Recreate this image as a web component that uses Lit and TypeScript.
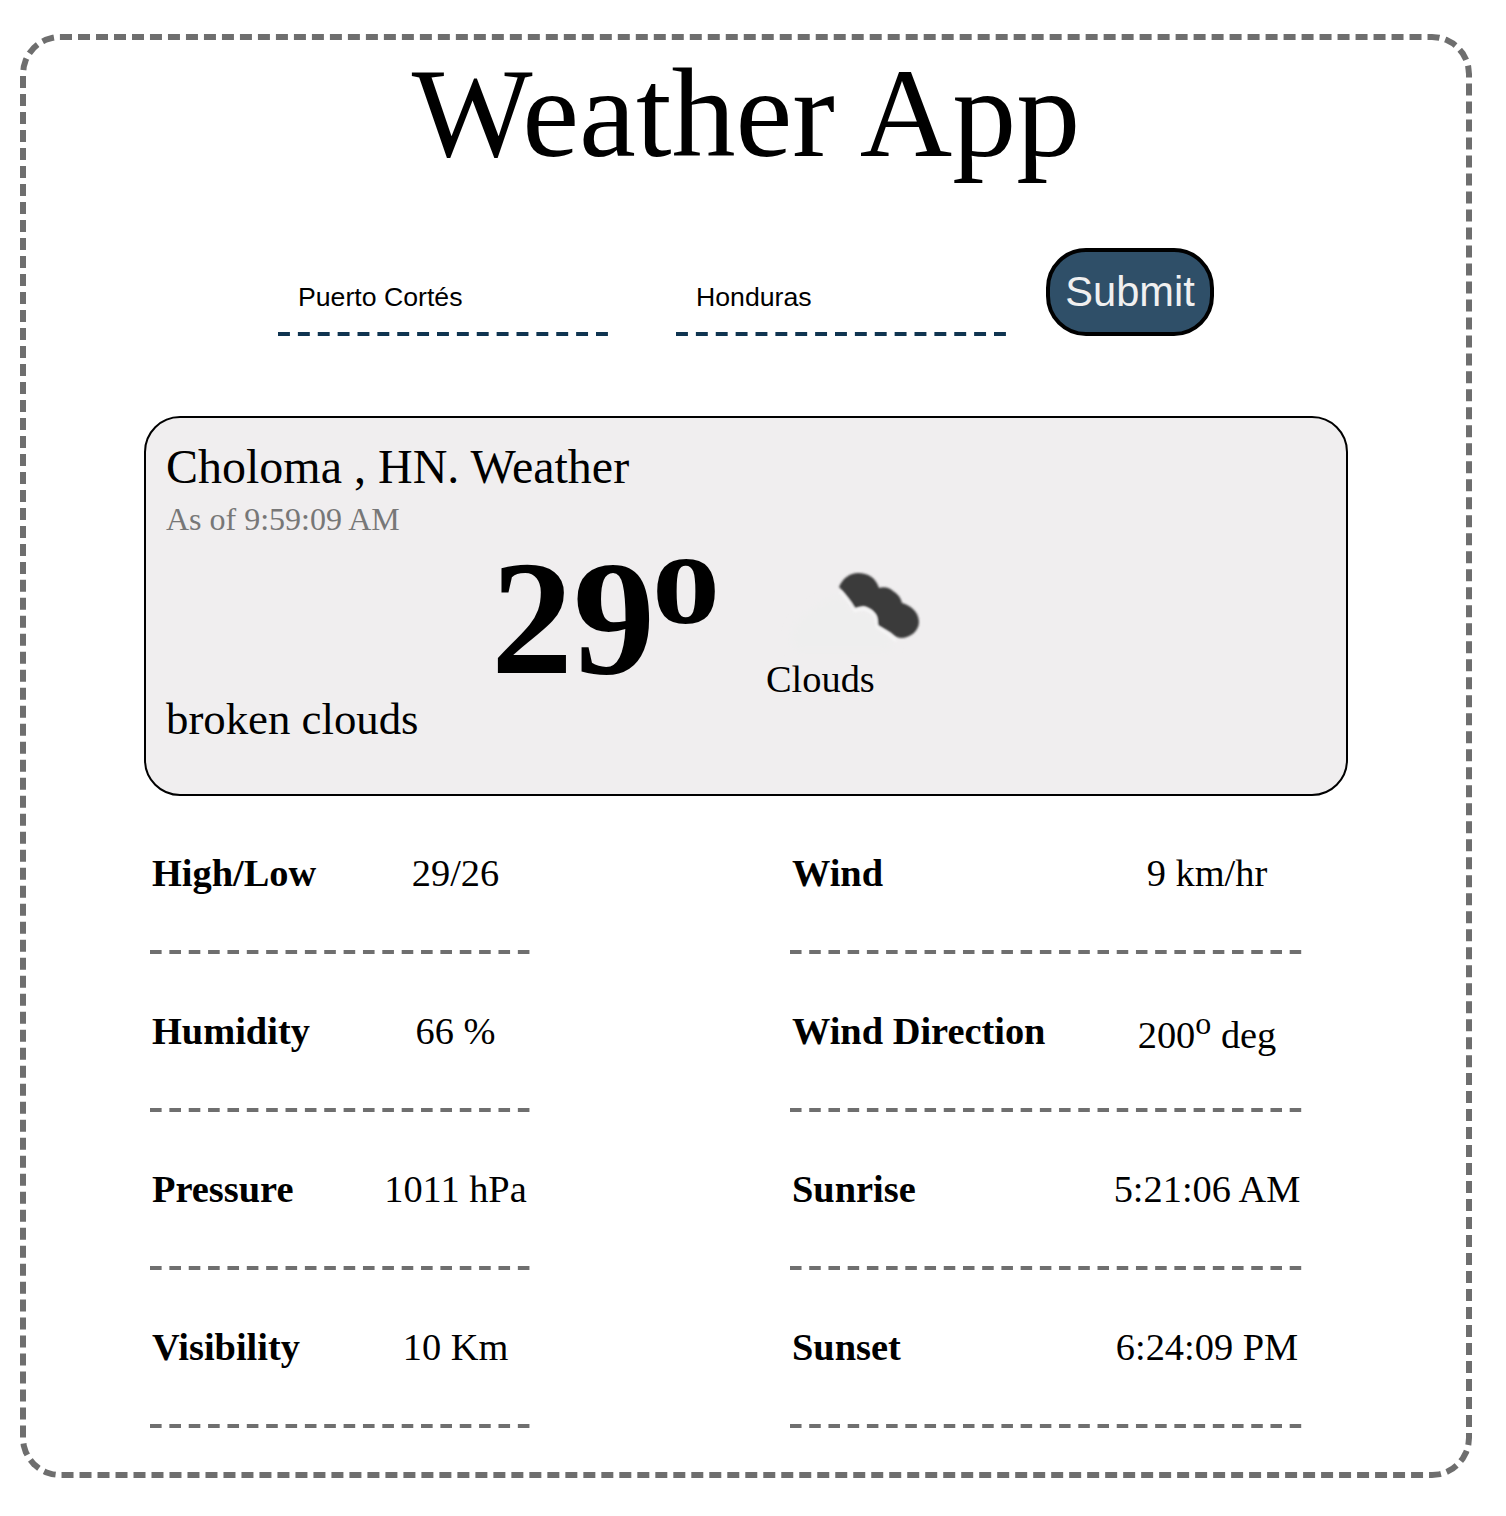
import { LitElement, html, css } from "lit";
import { customElement, property } from "lit/decorators.js";

const LEFT_ROWS = [
  { label: "High/Low", value: html`29/26` },
  { label: "Humidity", value: html`66 %` },
  { label: "Pressure", value: html`1011 hPa` },
  { label: "Visibility", value: html`10 Km` },
];

const RIGHT_ROWS = [
  { label: "Wind", value: html`9 km/hr` },
  { label: "Wind Direction", value: html`200<sup>o</sup> deg` },
  { label: "Sunrise", value: html`5:21:06 AM` },
  { label: "Sunset", value: html`6:24:09 PM` },
];

@customElement("app-root")
export class AppRoot extends LitElement {
  @property() city = "Puerto Cortés";
  @property() country = "Honduras";

  static styles = css`
    :host {
      display: block;
      height: 1516px;
      font-family: "Liberation Serif", "Times New Roman", serif;
      color: #000;
      background: #fff;
    }
    .app {
      box-sizing: border-box;
      width: 1452px;
      height: 1444px;
      margin-left: 20px;
      position: relative;
      top: 34px;
      border: 6px dashed #6e6e6e;
      border-radius: 40px;
      padding: 1px 0 0 118px;
    }
    h1 {
      margin: 0 0 0 -118px;
      font-size: 128px;
      font-weight: 400;
      line-height: 144px;
      text-align: center;
    }
    form {
      display: flex;
      justify-content: center;
      align-items: flex-start;
      margin: 63px 0 0 -118px;
    }
    input {
      box-sizing: border-box;
      width: 330px;
      height: 84px;
      margin: 4px 68px 0 0;
      padding: 10px 20px 4px;
      border: 0;
      outline: none;
      background: linear-gradient(to right, #0f3450 12px, transparent 12px) left bottom / 19.875px 4px repeat-x;
      font: 26.67px "Liberation Sans", Arial, sans-serif;
      color: #000;
    }
    input + input {
      margin-right: 40px;
    }
    button {
      box-sizing: border-box;
      width: 168px;
      height: 88px;
      padding: 0;
      border: 4px solid #000;
      border-radius: 40px;
      background: #2f4f68;
      font: 41.6px "Liberation Sans", Arial, sans-serif;
      color: #f0f0f0;
    }
    .card {
      box-sizing: border-box;
      width: 1204px;
      height: 380px;
      margin: 80px 0 0;
      padding: 21px 20px 0;
      border: 2px solid #000;
      border-radius: 36px;
      background: #f0eeef;
    }
    .city {
      font-size: 48px;
      line-height: 56px;
    }
    .time {
      font-size: 32px;
      line-height: 40px;
      margin-top: 4px;
      color: #777;
    }
    .now {
      display: flex;
      align-items: flex-start;
    }
    .desc {
      width: 329px;
      margin-top: 154px;
      font-size: 44.8px;
      line-height: 52px;
    }
    .temp {
      width: 275px;
      margin: -1px 0 0 -4px;
      font-size: 164px;
      font-weight: 700;
      line-height: 160px;
    }
    .temp sup {
      margin-left: -3px;
      font-size: 136px;
      line-height: 0;
      vertical-align: 50px;
    }
    .sky {
      font-size: 38.4px;
      line-height: 44px;
    }
    .sky svg {
      display: block;
      width: 220px;
      height: 110px;
      margin: 21px 0 -13px -26px;
    }
    .stats {
      display: grid;
      grid-template-columns: 380px 512px;
      column-gap: 260px;
      margin-left: 6px;
    }
    .row {
      box-sizing: border-box;
      display: flex;
      align-items: center;
      height: 158px;
      padding: 0 0 4px 2px;
      font-size: 38.4px;
    }
    .row b {
      flex: none;
    }
    .left {
      background: linear-gradient(to right, #6f6f6f 12px, transparent 12px) left bottom / 19.37px 4px repeat-x;
    }
    .right {
      background: linear-gradient(to right, #6f6f6f 12px, transparent 12px) left bottom / 19.23px 4px repeat-x;
    }
    .left b {
      width: 229px;
    }
    .right b {
      width: 320px;
    }
    .row span {
      flex: 1;
      text-align: center;
    }
    .row sup {
      line-height: normal;
    }
  `;

  private renderRow(row: { label: string; value: unknown }, side: string) {
    return html`<div class="row ${side}"><b>${row.label}</b><span>${row.value}</span></div>`;
  }

  render() {
    return html`
      <div class="app">
        <h1>Weather App</h1>
        <form @submit=${(e: Event) => e.preventDefault()}>
          <input type="text" .value=${this.city} />
          <input type="text" .value=${this.country} />
          <button type="submit">Submit</button>
        </form>
        <section class="card">
          <div class="city">Choloma , HN. Weather</div>
          <div class="time">As of 9:59:09 AM</div>
          <div class="now">
            <div class="desc">broken clouds</div>
            <div class="temp">29<sup>o</sup></div>
            <div class="sky">
              <!-- viewBox matches page coords so it's easy to compare -->
              <svg viewBox="740 560 220 110" aria-hidden="true">
                <defs>
                  <filter id="soft"><feGaussianBlur stdDeviation="1" /></filter>
                  <filter id="haze"><feGaussianBlur stdDeviation="5" /></filter>
                </defs>
                <path
                  fill="#eeeeee"
                  filter="url(#haze)"
                  d="M838 595 C845 600 851 606 855 612 C861 610 870 612 874 617 C876 620 876 624 877 628 L893 640 L892 650 L795 650 C788 640 792 625 806 614 C816 606 828 599 838 595 Z"
                />
                <g filter="url(#soft)">
                  <path
                    fill="none"
                    stroke="#f8f8f8"
                    stroke-width="2"
                    d="M840 592 C846 597 851 604 855 611 C858 610 861 609 864 609 C868 610 871 612 874 615 C876 618 876 622 877 627 L889 635 L896 641"
                  />
                  <path
                    fill="#3a3a3a"
                    d="M839 587 C843 578 850 573 858 573 C868 573 876 578 879 588 C884 586 890 588 893 591 C898 594 901 598 902 603 C910 605 919 612 919 622 C919 631 910 638 901 638 C897 638 894 635 890 632 L878 625 C878 620 878 616 875 613 C872 609 868 607 864 606 C861 606 858 607 855 608 C851 601 845 593 839 587 Z"
                  />
                </g>
              </svg>
              Clouds
            </div>
          </div>
        </section>
        <div class="stats">
          ${LEFT_ROWS.map(
            (row, i) => html`${this.renderRow(row, "left")}${this.renderRow(RIGHT_ROWS[i], "right")}`
          )}
        </div>
      </div>
    `;
  }
}
